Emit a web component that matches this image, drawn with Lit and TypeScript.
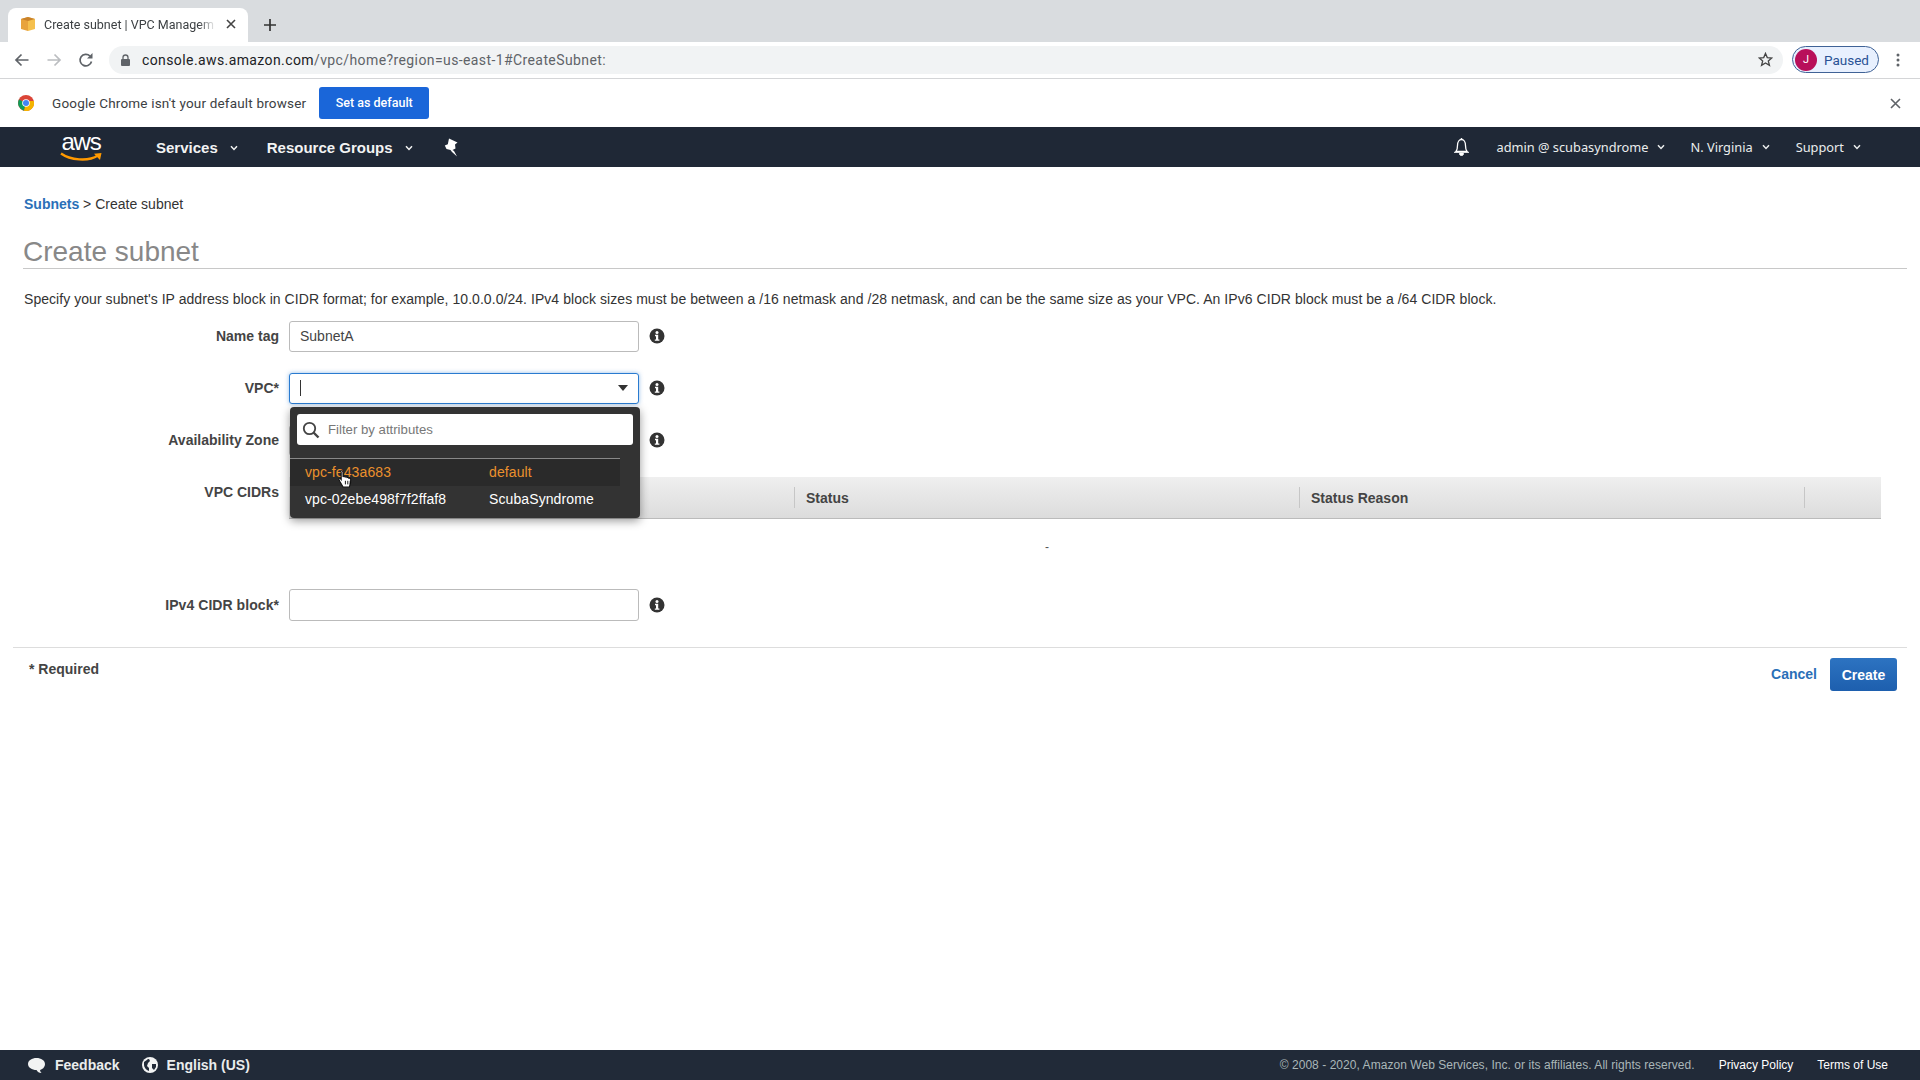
import { LitElement, html, css } from "lit";
import { customElement } from "lit/decorators.js";

const chev = html`<svg class="chev" width="8" height="6" viewBox="0 0 8 6"><path d="M1 1.200 4 4.400 7 1.200" fill="none" stroke="currentColor" stroke-width="1.500"/></svg>`;
const info = html`<svg class="info" width="16" height="16" viewBox="0 0 16 16"><circle cx="8" cy="8" r="7.500" fill="#333"/><circle cx="8" cy="4.400" r="1.500" fill="#fff"/><path d="M6 6.800h3.200v4.600H10.400v1.400H5.800v-1.400H7V8.200H6z" fill="#fff"/></svg>`;

@customElement("app-root")
export class AppRoot extends LitElement {
  static styles = css`
    :host { display: flex; flex-direction: column; height: 1080px; width: 1920px; overflow: hidden; background: #fff; font-family: "Liberation Sans", Arial, sans-serif; font-size: 14px; color: #333; }
    * { box-sizing: border-box; }
    .tabstrip { height: 42px; background: #d9dcdf; display: flex; align-items: flex-end; padding-left: 8px; flex: none; }
    .tab { width: 240px; height: 34px; background: #fff; border-radius: 8px 8px 0 0; display: flex; align-items: center; padding: 0 11px 2px 12px; font: 12.5px Roboto, sans-serif; color: #3c4043; }
    .tab-title { flex: none; width: 172px; margin-left: 8px; white-space: nowrap; -webkit-mask-image: linear-gradient(90deg, #000 90%, transparent 100%); mask-image: linear-gradient(90deg, #000 90%, transparent 100%); }
    .tab-x { margin-left: 10px; display: flex; }
    .plus { margin: 0 0 11px 16px; display: flex; }
    .toolbar { height: 37px; flex: none; background: #fff; border-bottom: 1px solid #d4d5d7; display: flex; align-items: center; padding: 0 0 1px 14px; }
    .navbtn { width: 32px; display: flex; justify-content: flex-start; }
    .omni { margin-left: -1px; width: 1674px; height: 28px; background: #f1f3f4; border-radius: 14px; display: flex; align-items: center; padding: 0 10px 0 12px; font: 14px Roboto, sans-serif; color: #5f6368; letter-spacing: 0.4px; }
    .omni b { font-weight: 400; color: #202124; }
    .lock { margin-right: 12px; display: flex; }
    .star { margin-left: auto; display: flex; }
    .pill { margin-left: 9px; width: 87px; height: 27px; border: 1px solid #3f6296; border-radius: 14px; background: #e8f0fe; display: flex; align-items: center; padding-left: 2px; font: 13.5px Roboto, sans-serif; color: #2a5295; }
    .avatar { width: 22px; height: 22px; border-radius: 50%; background: #b80f5a; color: #fff; font-size: 11px; display: flex; align-items: center; justify-content: center; margin-right: 7px; }
    .dots { margin-left: 17px; display: flex; }
    .infobar { height: 48px; flex: none; background: #fff; display: flex; align-items: center; padding: 0 19px 0 18px; font: 13.5px Roboto, sans-serif; color: #3c4043; letter-spacing: 0.18px; }
    .infobar .msg { margin-left: 18px; }
    .setdef { margin-left: 13px; width: 110px; height: 32px; background: #1a66d9; color: #fff; border-radius: 3px; display: flex; align-items: center; justify-content: center; font-size: 12.5px; font-weight: 500; letter-spacing: 0; padding-bottom: 1px; }
    .infobar .close { margin-left: auto; display: flex; }
    .nav { height: 40px; flex: none; background: #1f2836; color: #fff; display: flex; align-items: center; padding-left: 60px; }
    .logo { width: 42px; height: 32px; display: flex; flex-direction: column; align-items: center; margin-right: 54px; color: #fff; font: 24px/21px "Liberation Sans", sans-serif; letter-spacing: -1.200px; }
    .logo svg { flex: none; }
    .nav-b { font-weight: 700; font-size: 15px; display: flex; align-items: center; color: #f2f3f3; padding-top: 1px; }
    .nav-b .chev { margin-left: 12px; }
    .nav-b.rg { margin-left: 29px; }
    .pin { margin-left: 31px; display: flex; }
    .nav-r { margin-left: auto; display: flex; align-items: center; font: 12.8px "Noto Sans", sans-serif; color: #eaeded; padding-right: 59px; }
    .nav-r .it { display: flex; align-items: center; }
    .nav-r .chev { margin-left: 9px; }
    .bell { display: flex; margin-right: 26px; }
    .it.reg { margin-left: 25px; }
    .it.sup { margin-left: 26px; }
    main { flex: 1; position: relative; padding-top: 27px; }
    .crumb { height: 20px; line-height: 20px; padding-left: 24px; color: #333; }
    .crumb a { color: #2a70b8; font-weight: 700; }
    h1 { margin: 20px 13px 0 23px; height: 35px; border-bottom: 1px solid #c8c8c8; font-size: 28px; line-height: 35px; font-weight: 400; color: #888; }
    .desc { margin: 20px 0 0 24px; height: 22px; line-height: 20px; color: #333; white-space: nowrap; letter-spacing: 0.052px; }
    .form { margin-top: 10px; position: relative; }
    .row { display: flex; align-items: center; height: 31px; margin-bottom: 21px; }
    .row.top { align-items: flex-start; height: 92px; margin-bottom: 20px; }
    .row.last { height: 32px; margin-bottom: 26px; }
    label { width: 279px; text-align: right; font-weight: 700; color: #444; flex: none; margin-bottom: 2px; }
    .row.top label { padding-top: 7px; margin-bottom: 0; }
    .row.last label { margin-bottom: 0; letter-spacing: 0.06px; }
    .input { margin-left: 10px; width: 350px; height: 100%; border: 1px solid #bbb; border-radius: 3px; background: #fff; display: flex; align-items: center; padding: 0 10px 2px; color: #444; flex: none; }
    .input.focus { border-color: #2a7bd0; box-shadow: 0 0 4px rgba(42,123,208,.5); }
    .caret { width: 1px; height: 16px; background: #333; }
    .arrow { margin-left: auto; width: 0; height: 0; border-left: 5.500px solid transparent; border-right: 5.500px solid transparent; border-top: 6px solid #333; }
    .info { margin: 0 0 2px 10px; flex: none; }
    .row.last .info { margin-bottom: 0; }
    .table { margin-left: 10px; width: 1592px; flex: none; }
    .thead { height: 42px; display: flex; align-items: center; background: linear-gradient(#efefef, #dcdcdc); border-bottom: 1px solid #bbb; color: #444; font-weight: 700; }
    .th { width: 505px; height: 21px; border-right: 1px solid #c6c6c6; line-height: 22px; padding-left: 11px; flex: none; }
    .th.first { width: 506px; }
    .tbody { height: 50px; padding: 18px 0 0 756px; color: #555; font-size: 12px; line-height: 20px; }
    .dd { position: absolute; left: 290px; top: 86px; width: 350px; height: 111px; background: #333; border-radius: 4px; box-shadow: 0 3px 10px rgba(0,0,0,.4); padding-top: 7px; color: #fff; z-index: 2; }
    .filter { margin: 0 7px; height: 31px; background: #fff; border-radius: 3px; display: flex; align-items: center; padding-left: 5px; color: #777; font-size: 13.200px; }
    .filter svg { margin-right: 8px; }
    .opts { margin-top: 13px; width: 330px; border-top: 1px solid #888; letter-spacing: 0.1px; }
    .opt { height: 27px; display: flex; align-items: center; padding: 0 0 2px 15px; }
    .opt span:first-child { width: 184px; }
    .opt.hover { background: #2a2a2a; color: #ec912d; }
    .cursor { position: absolute; left: 338px; top: 149px; z-index: 3; display: flex; }
    .rule { margin: 0 13px; height: 1px; background: #ddd; }
    .actions { display: flex; padding: 10px 23px 0 29px; }
    .req { font-weight: 700; color: #444; line-height: 20px; margin-top: 1px; }
    .cancel { margin-left: auto; color: #2a70b8; font-weight: 700; height: 33px; line-height: 33px; }
    .create { margin-left: 13px; width: 67px; height: 33px; background: linear-gradient(#2d73c1, #1d5fae); color: #fff; font-weight: 700; border-radius: 3px; display: flex; align-items: center; justify-content: center; }
    footer { height: 30px; flex: none; background: #212a38; display: flex; align-items: center; padding: 0 32px 0 27px; color: #eaeded; }
    footer .l { font-weight: 700; display: flex; align-items: center; font-size: 14px; }
    footer .l svg { margin-right: 9px; }
    footer .en { margin-left: 22px; }
    .copy { margin-left: auto; font-size: 12px; color: #aab7b8; letter-spacing: 0.046px; }
    .fl { font-size: 12px; color: #fff; margin-left: 24px; }
  `;

  render() {
    return html`
      <div class="tabstrip">
        <div class="tab">
          <svg width="16" height="16" viewBox="0 0 16 16"><path d="M1 3 8 1v14l-7-2z" fill="#e8a33d"/><path d="M15 3 8 1v14l7-2z" fill="#f5c04e"/><path d="M1 3 8 5l7-2-7-2z" fill="#c9822b"/></svg>
          <span class="tab-title">Create subnet | VPC Managem</span>
          <span class="tab-x"><svg width="10" height="10" viewBox="0 0 10 10"><path d="M1 1l8 8M9 1 1 9" stroke="#444" stroke-width="1.600"/></svg></span>
        </div>
        <span class="plus"><svg width="12" height="12" viewBox="0 0 12 12"><path d="M6 0v12M0 6h12" stroke="#333" stroke-width="1.700"/></svg></span>
      </div>
      <div class="toolbar">
        <span class="navbtn"><svg width="16" height="14" viewBox="0 0 16 14"><path d="M14.500 7H2M7.500 1.500 2 7l5.500 5.500" fill="none" stroke="#5f6368" stroke-width="1.700"/></svg></span>
        <span class="navbtn"><svg width="16" height="14" viewBox="0 0 16 14"><path d="M1.500 7H14M8.500 1.500 14 7l-5.500 5.500" fill="none" stroke="#bbbdc0" stroke-width="1.700"/></svg></span>
        <span class="navbtn"><svg width="16" height="16" viewBox="0 0 16 16"><path d="M13.500 9.500A5.800 5.800 0 1 1 12 4" fill="none" stroke="#5f6368" stroke-width="1.700"/><path d="M14.500 1v5.500H9z" fill="#5f6368"/></svg></span>
        <div class="omni">
          <span class="lock"><svg width="9" height="12" viewBox="0 0 9 12"><path d="M2 5V3.500a2.500 2.500 0 0 1 5 0V5" fill="none" stroke="#5f6368" stroke-width="1.300"/><rect y="5" width="9" height="7" rx="1" fill="#5f6368"/></svg></span>
          <span><b>console.aws.amazon.com</b>/vpc/home?region=us-east-1#CreateSubnet:</span>
          <span class="star"><svg width="15" height="15" viewBox="0 0 16 16"><path d="M8 1.500 9.900 6l4.800.4-3.700 3.100 1.200 4.700L8 11.700l-4.200 2.500L5 9.500 1.300 6.400 6.100 6z" fill="none" stroke="#444" stroke-width="1.400"/></svg></span>
        </div>
        <div class="pill"><span class="avatar">J</span>Paused</div>
        <span class="dots"><svg width="4" height="14" viewBox="0 0 4 14"><circle cx="2" cy="2" r="1.500" fill="#5f6368"/><circle cx="2" cy="7" r="1.500" fill="#5f6368"/><circle cx="2" cy="12" r="1.500" fill="#5f6368"/></svg></span>
      </div>
      <div class="infobar">
        <svg width="16" height="16" viewBox="0 0 16 16"><circle cx="8" cy="8" r="8" fill="#db4437"/><path d="M8 8 1 4.500A8 8 0 0 0 6 15.800z" fill="#0f9d58"/><path d="M8 8 6 15.800A8 8 0 0 0 15.800 6H8z" fill="#f4b400"/><circle cx="8" cy="8" r="3.800" fill="#fff"/><circle cx="8" cy="8" r="3" fill="#4285f4"/></svg>
        <span class="msg">Google Chrome isn't your default browser</span>
        <span class="setdef">Set as default</span>
        <span class="close"><svg width="11" height="11" viewBox="0 0 11 11"><path d="M1 1l9 9M10 1l-9 9" stroke="#5f6368" stroke-width="1.600"/></svg></span>
      </div>
      <div class="nav">
        <div class="logo">aws<svg width="43" height="11" viewBox="0 0 43 11"><path d="M1 1.500C10 8 28 10 38 3.500" fill="none" stroke="#f90" stroke-width="2.300"/><path d="M34 1.800 41.500 1 40 8z" fill="#f90"/></svg></div>
        <span class="nav-b">Services${chev}</span>
        <span class="nav-b rg">Resource Groups${chev}</span>
        <span class="pin"><svg width="14" height="19" viewBox="0 0 14 19"><path d="M5 .5 13.500 4.500 11 6.500l.5 4-3 1.500L10 13 13 18.500 8 14l-1.500-2L2.500 11 .8 7.500l3-1.300z" fill="#fff"/></svg></span>
        <div class="nav-r">
          <span class="bell"><svg width="17" height="18" viewBox="0 0 17 18"><path d="M3 13.500c1.300-1.700 1.500-3.500 1.500-6C4.500 4 6.300 1.500 8.500 1.500S12.500 4 12.500 7.500c0 2.500.2 4.300 1.500 6z" fill="none" stroke="#fff" stroke-width="1.300"/><path d="M1 14.300h15M6.500 15.500a2 2 0 0 0 4 0z" stroke="#fff" fill="#fff" stroke-width="1"/><circle cx="8.500" cy="1" r=".9" fill="#fff"/></svg></span>
          <span class="it">admin @ scubasyndrome${chev}</span>
          <span class="it reg">N. Virginia${chev}</span>
          <span class="it sup">Support${chev}</span>
        </div>
      </div>
      <main>
        <div class="crumb"><a>Subnets</a> &gt; Create subnet</div>
        <h1>Create subnet</h1>
        <div class="desc">Specify your subnet's IP address block in CIDR format; for example, 10.0.0.0/24. IPv4 block sizes must be between a /16 netmask and /28 netmask, and can be the same size as your VPC. An IPv6 CIDR block must be a /64 CIDR block.</div>
        <div class="form">
          <div class="row"><label>Name tag</label><div class="input">SubnetA</div>${info}</div>
          <div class="row"><label>VPC*</label><div class="input focus"><span class="caret"></span><span class="arrow"></span></div>${info}</div>
          <div class="row"><label>Availability Zone</label><div class="input"></div>${info}</div>
          <div class="row top"><label>VPC CIDRs</label>
            <div class="table">
              <div class="thead"><div class="th first"></div><div class="th">Status</div><div class="th">Status Reason</div></div>
              <div class="tbody">-</div>
            </div>
          </div>
          <div class="row last"><label>IPv4 CIDR block*</label><div class="input"></div>${info}</div>
          <div class="dd">
            <div class="filter">
              <svg width="18" height="18" viewBox="0 0 18 18"><circle cx="7.500" cy="7.500" r="5.700" fill="none" stroke="#444" stroke-width="1.800"/><path d="M11.500 11.500l5 5" stroke="#444" stroke-width="2.400"/></svg>
              Filter by attributes
            </div>
            <div class="opts">
              <div class="opt hover"><span>vpc-fe43a683</span><span>default</span></div>
              <div class="opt"><span>vpc-02ebe498f7f2ffaf8</span><span>ScubaSyndrome</span></div>
            </div>
          </div>
          <span class="cursor"><svg width="16" height="18" viewBox="0 0 13 15"><path d="M2.800.6c.8 0 1.200.5 1.200 1.300v4l.3-.6c.7-.3 1.300 0 1.500.6.500-.5 1.300-.3 1.600.4.600-.4 1.400-.1 1.500.6.600-.3 1.400 0 1.500.8.200 1.800-.2 3.800-.9 5.700l-.3.9H4.200L1.300 9.300.6 7.800c-.2-.7.700-1.200 1.100-.7l.8 1V1.900C1.600 1.100 2 .6 2.800.6z" fill="#fff" stroke="#111" stroke-width=".9"/><path d="M6 9v3M8 9v3M10 9v3" stroke="#111" stroke-width=".8"/></svg></span>
        </div>
        <div class="rule"></div>
        <div class="actions">
          <span class="req">* Required</span>
          <span class="cancel">Cancel</span>
          <span class="create">Create</span>
        </div>
      </main>
      <footer>
        <span class="l"><svg width="19" height="17" viewBox="0 0 19 17"><path d="M9.500 1C14 1 18 3.500 18 7s-3 5.500-5 6c0 1 .5 2 1.500 3-2.500 0-4-1.200-5-3C5 13 1 10.500 1 7s4-6 8.500-6z" fill="#f2f3f3"/></svg>Feedback</span>
        <span class="l en"><svg width="16" height="16" viewBox="0 0 16 16"><circle cx="8" cy="8" r="8" fill="#f2f3f3"/><path d="M2 5c2-1 3-3 5-3l1 2-2 2-1 3 2 2v3C4 13 2 10 2 8zM10 7h4v3l-2 3-2-2z" fill="#212a38"/></svg>English (US)</span>
        <span class="copy">© 2008 - 2020, Amazon Web Services, Inc. or its affiliates. All rights reserved.</span>
        <span class="fl">Privacy Policy</span>
        <span class="fl">Terms of Use</span>
      </footer>
    `;
  }
}
